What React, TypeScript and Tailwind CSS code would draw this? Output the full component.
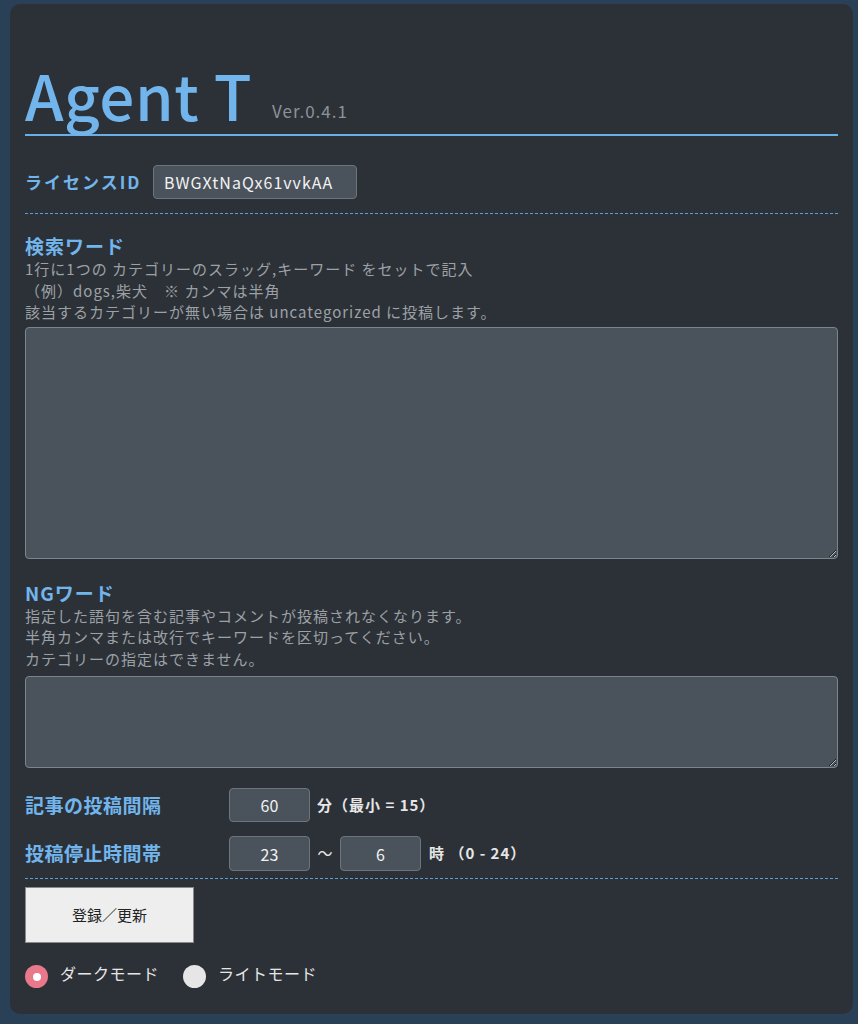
import React, { useState } from 'react';

const FONT = { fontFamily: '"Noto Sans CJK JP", "Noto Sans", sans-serif' };

const App: React.FC = () => {
  const [mode, setMode] = useState<'dark' | 'light'>('dark');

  return (
    <div className="min-h-screen bg-[#2a4057] pt-[4px] px-[10px] pb-[10px]" style={FONT}>
      <div className="w-[843px] rounded-[10px] bg-[#2c3138] px-[15px] pb-[26px]">
        {/* Title */}
        <div className="flex items-end gap-[20px] border-b-2 border-[#6aaee6] pt-[58px] pb-[8px]">
          <h1 className="text-[62px] leading-[64px] font-medium text-[#72b5ec] tracking-[0.5px]">Agent T</h1>
          <span className="mb-[5px] text-[17px] leading-[20px] text-[#8c9298] tracking-[1px]">Ver.0.4.1</span>
        </div>

        {/* License */}
        <div className="flex items-center border-b border-dashed border-[#5f9fd6] pt-[29px] pb-[14px]">
          <span className="w-[128px] text-[17px] font-bold text-[#72b5ec] tracking-[2px]">ライセンスID</span>
          <input
            defaultValue="BWGXtNaQx61vvkAA"
            className="h-[34px] w-[204px] rounded-[4px] border border-[#6c747c] bg-[#4a535b] px-[10px] text-[16px] text-[#f2f2f2] tracking-[1px] outline-none"
          />
        </div>

        {/* Search words */}
        <h2 className="mt-[20px] text-[19px] leading-[24px] font-bold text-[#72b5ec] tracking-[1px]">検索ワード</h2>
        <div className="text-[15px] leading-[21.5px] text-[#9ca1a6] tracking-[1px]">
          <p>1行に1つの カテゴリーのスラッグ,キーワード をセットで記入</p>
          <p>（例）dogs,柴犬　※ カンマは半角</p>
          <p>該当するカテゴリーが無い場合は uncategorized に投稿します。</p>
        </div>
        <textarea className="mt-[4px] block h-[232px] w-full rounded-[4px] border border-[#7d858c] bg-[#4a535b] text-[#eee] outline-none" />

        {/* NG words */}
        <h2 className="mt-[22px] text-[19px] leading-[24px] font-bold text-[#72b5ec] tracking-[1px]">NGワード</h2>
        <div className="text-[15px] leading-[21.5px] text-[#9ca1a6] tracking-[1px]">
          <p>指定した語句を含む記事やコメントが投稿されなくなります。</p>
          <p>半角カンマまたは改行でキーワードを区切ってください。</p>
          <p>カテゴリーの指定はできません。</p>
        </div>
        <textarea className="mt-[7px] block h-[92px] w-full rounded-[4px] border border-[#7d858c] bg-[#4a535b] text-[#eee] outline-none" />

        {/* Interval */}
        <div className="mt-[20px] flex items-center">
          <span className="w-[204px] text-[19px] font-bold text-[#72b5ec] tracking-[0.5px]">記事の投稿間隔</span>
          <input
            defaultValue="60"
            className="h-[34px] w-[81px] rounded-[4px] border border-[#6c747c] bg-[#4a535b] text-center text-[16px] text-[#f2f2f2] outline-none"
          />
          <span className="ml-[7px] text-[15px] font-bold text-[#e6e6e6] tracking-[1px]">分（最小 = 15）</span>
        </div>

        {/* Stop hours */}
        <div className="mt-[14px] flex items-center">
          <span className="w-[204px] text-[19px] font-bold text-[#72b5ec] tracking-[0.5px]">投稿停止時間帯</span>
          <input
            defaultValue="23"
            className="h-[35px] w-[81px] rounded-[4px] border border-[#6c747c] bg-[#4a535b] text-center text-[16px] text-[#f2f2f2] outline-none"
          />
          <span className="w-[30px] text-center text-[15px] text-[#e6e6e6]">〜</span>
          <input
            defaultValue="6"
            className="h-[35px] w-[81px] rounded-[4px] border border-[#6c747c] bg-[#4a535b] text-center text-[16px] text-[#f2f2f2] outline-none"
          />
          <span className="ml-[8px] text-[15px] font-bold text-[#e6e6e6] tracking-[1px]">時 （0 - 24）</span>
        </div>

        <div className="mt-[7px] border-b border-dashed border-[#5f9fd6]" />

        {/* Submit */}
        <button className="mt-[8px] h-[56px] w-[169px] border border-[#8a8a8a] bg-[#eeeeee] text-[15px] text-[#222]">
          登録／更新
        </button>

        {/* Theme radios */}
        <div className="mt-[22px] flex items-center gap-[12px]">
          <label className="flex cursor-pointer items-center gap-[12px]" onClick={() => setMode('dark')}>
            <span
              className={
                mode === 'dark'
                  ? 'flex h-[23px] w-[23px] items-center justify-center rounded-full bg-[#e8788a]'
                  : 'flex h-[23px] w-[23px] items-center justify-center rounded-full bg-[#e6e6e6]'
              }
            >
              {mode === 'dark' && <span className="h-[8px] w-[8px] rounded-full bg-white" />}
            </span>
            <span className="-mt-[7px] text-[16px] text-[#e6e6e6] tracking-[0.5px]">ダークモード</span>
          </label>
          <label className="ml-[12px] flex cursor-pointer items-center gap-[12px]" onClick={() => setMode('light')}>
            <span
              className={
                mode === 'light'
                  ? 'flex h-[23px] w-[23px] items-center justify-center rounded-full bg-[#e8788a]'
                  : 'flex h-[23px] w-[23px] items-center justify-center rounded-full bg-[#e6e6e6]'
              }
            >
              {mode === 'light' && <span className="h-[8px] w-[8px] rounded-full bg-white" />}
            </span>
            <span className="-mt-[7px] text-[16px] text-[#e6e6e6] tracking-[0.5px]">ライトモード</span>
          </label>
        </div>
      </div>
    </div>
  );
};

export default App;
